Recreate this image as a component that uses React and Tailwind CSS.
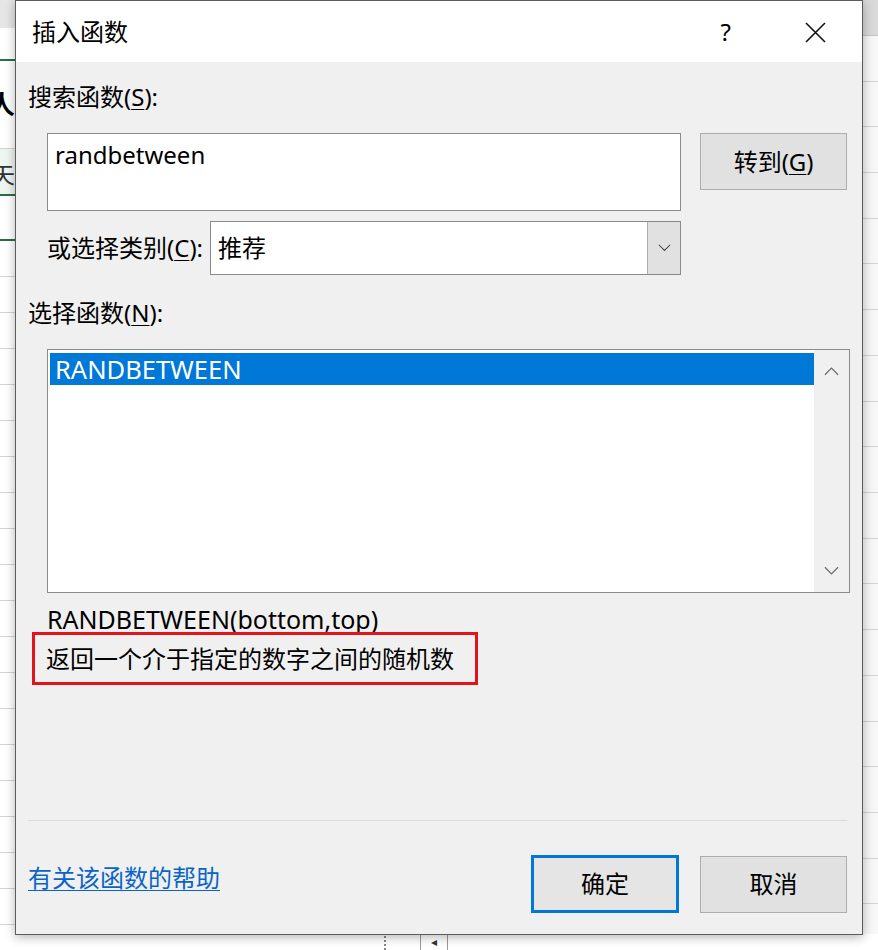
import React from 'react'

const font = "font-['Noto_Sans','Noto_Sans_CJK_SC',sans-serif]"

const Chevron = ({ dir = 'down', className = '', color = '#6a6a6a' }) => (
    <svg width="16" height="10" viewBox="0 0 16 10" className={className}>
        <polyline
            points={dir === 'down' ? '1,1 8,8 15,1' : '1,9 8,2 15,9'}
            fill="none"
            stroke={color}
            strokeWidth="1.3"
        />
    </svg>
)

const Key = ({ children }) => <span className="underline underline-offset-[3px] decoration-1">{children}</span>

const Sheet = () => (
    <>
        {/* excel behind the dialog, left strip */}
        <div className="absolute left-0 top-0 w-[15px] h-[950px] flex flex-col">
            <div className="h-[28px] bg-[#e6e6e6]" />
            <div className="h-[33px] bg-white border-b-2 border-[#217346]" />
            <div className="h-[88px] bg-white border-b border-[#d4d4d4] flex items-center text-[26px] font-bold text-black overflow-hidden">
                <span className="-ml-[11px]">人</span>
            </div>
            <div className="h-[47px] bg-[#eef6f1] border-b-2 border-[#217346] flex items-center text-[24px] text-[#333] overflow-hidden">
                <span className="-ml-[9px] mt-[4px]">矢</span>
            </div>
            <div className="h-[45px] bg-white border-b-2 border-[#217346]" />
            {Array.from({ length: 19 }).map((_, i) => (
                <div key={i} className="h-[36px] bg-white border-b border-[#d4d4d4]" />
            ))}
        </div>
        {/* right strip */}
        <div className="absolute right-0 top-0 w-[16px] h-[950px] flex flex-col">
            <div className="h-[36px] bg-[#d9d9d9] border-b border-[#c6c6c6]" />
            {Array.from({ length: 20 }).map((_, i) => (
                <div key={i} className="h-[46px] bg-[#f7f7f7] border-b border-[#d4d4d4]" />
            ))}
        </div>
        {/* bottom strip */}
        <div className="absolute left-0 bottom-0 w-[878px] h-[16px] bg-white flex items-end">
            <div className="ml-[384px] h-[14px] border-l-2 border-dotted border-[#888]" />
            <div className="ml-[34px] h-[16px] w-[28px] border-l border-r border-[#9a9a9a] flex items-center justify-center text-[12px] text-[#333] leading-none">
                ◂
            </div>
        </div>
    </>
)

const App = () => {
    return (
        <div className={`relative w-[878px] h-[950px] overflow-hidden bg-white text-black ${font}`}>
            <Sheet />

            <div className="absolute left-[15px] top-0 w-[848px] h-[935px] border border-[#5c5c5c] bg-[#f0f0f0] shadow-[0_2px_10px_rgba(0,0,0,0.3)] flex flex-col">
                {/* title bar */}
                <div className="h-[61px] bg-white flex items-center shrink-0">
                    <span className="ml-[16px] text-[24px] mt-[1px]">插入函数</span>
                    <span className="ml-auto mr-[74px] text-[24px] mt-[1px]">?</span>
                    <svg width="21" height="21" viewBox="0 0 21 21" className="mr-[36px] mt-[1px]">
                        <path d="M1 1 L20 20 M20 1 L1 20" stroke="#111" strokeWidth="1.6" />
                    </svg>
                </div>

                <div className="flex flex-col pl-[12px] pr-[15px] text-[24px]">
                    <div className="mt-[19px] h-[32px] leading-[32px]">
                        搜索函数(<Key>S</Key>):
                    </div>

                    <div className="mt-[20px] ml-[19px] flex">
                        <div className="w-[635px] h-[78px] bg-white border border-[#8a8a8a] px-[7px] pt-[5px] leading-[32px]">
                            randbetween
                        </div>
                        <button className="ml-[19px] w-[147px] h-[57px] bg-[#e1e1e1] border border-[#adadad] leading-none">
                            转到(<Key>G</Key>)
                        </button>
                    </div>

                    <div className="mt-[10px] ml-[19px] flex items-center h-[54px]">
                        <span className="w-[163px] whitespace-nowrap">
                            或选择类别(<Key>C</Key>):
                        </span>
                        <div className="w-[471px] h-[54px] bg-white border border-[#8a8a8a] flex items-center">
                            <span className="ml-[7px]">推荐</span>
                            <div className="ml-auto w-[33px] h-full bg-[#e1e1e1] border-l border-[#adadad] flex items-center justify-center">
                                <Chevron className="w-[13px]" color="#444" />
                            </div>
                        </div>
                    </div>

                    <div className="mt-[22px] h-[32px] leading-[32px]">
                        选择函数(<Key>N</Key>):
                    </div>

                    <div className="mt-[20px] ml-[19px] w-[803px] h-[244px] bg-white border border-[#8a8a8a] flex">
                        <div className="flex-1 pt-[3px] pl-[2px]">
                            <div className="h-[32px] bg-[#0078d7] text-white pl-[5px] leading-[32px] text-[25.5px]">RANDBETWEEN</div>
                        </div>
                        <div className="w-[35px] bg-[#f0f0f0] flex flex-col items-center justify-between py-[16px]">
                            <Chevron dir="up" className="w-[15px]" />
                            <Chevron className="w-[15px]" />
                        </div>
                    </div>

                    <div className="mt-[11px] ml-[19px] h-[30px] leading-[30px] text-[25px]">RANDBETWEEN(bottom,top)</div>

                    <div className="mt-[-2px] ml-[4px] w-[446px] h-[53px] border-[3px] border-[#e3131c] pl-[11px] flex items-center whitespace-nowrap">
                        返回一个介于指定的数字之间的随机数
                    </div>

                    <div className="mt-[135px] h-px bg-[#dcdcdc]" />

                    <div className="mt-[34px] flex items-center">
                        <a className="mb-[12px] text-[#0a64c8] underline underline-offset-[3px] decoration-1 leading-none">有关该函数的帮助</a>
                        <button className="ml-auto w-[148px] h-[58px] bg-[#e5e5e5] border-[3px] border-[#0078d7] leading-none">
                            确定
                        </button>
                        <button className="ml-[21px] w-[147px] h-[57px] bg-[#e1e1e1] border border-[#adadad] leading-none">
                            取消
                        </button>
                    </div>
                </div>
            </div>
        </div>
    )
}

export default App
